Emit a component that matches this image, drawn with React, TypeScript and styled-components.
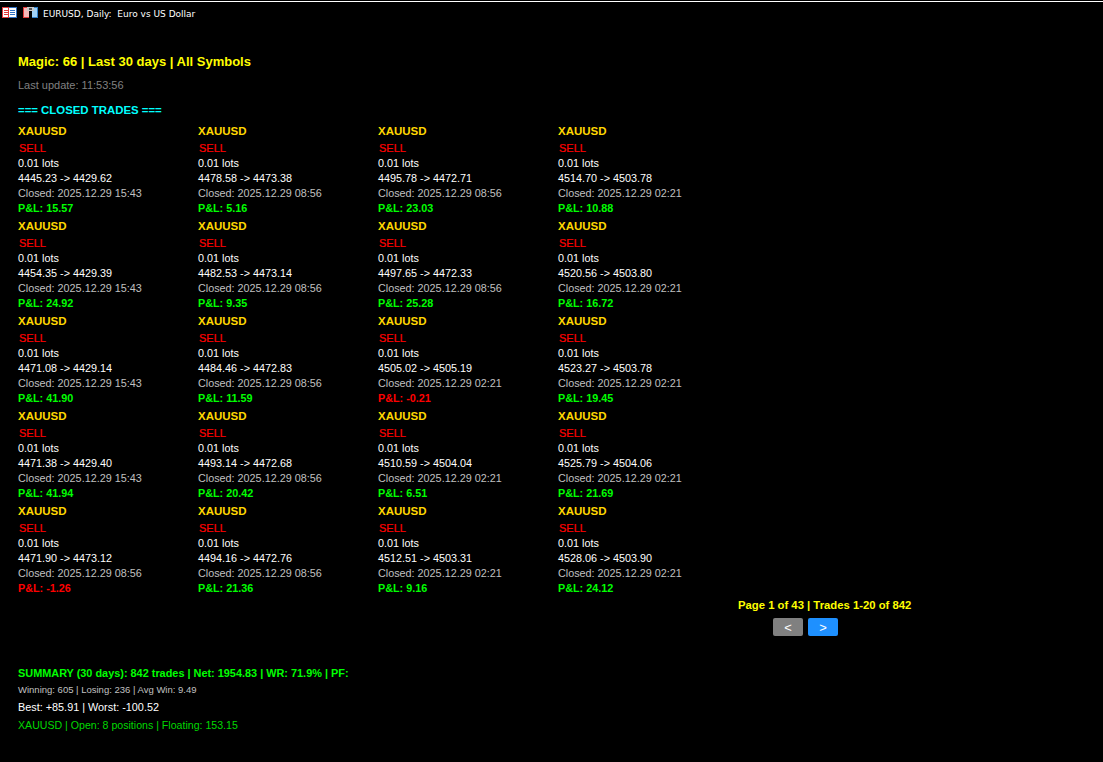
import React from "react";
import styled, { createGlobalStyle } from "styled-components";

type Trade = { open: string; close: string; closed: string; pnl: string };

const trades: Trade[] = [
  { open: "4445.23", close: "4429.62", closed: "2025.12.29 15:43", pnl: "15.57" },
  { open: "4478.58", close: "4473.38", closed: "2025.12.29 08:56", pnl: "5.16" },
  { open: "4495.78", close: "4472.71", closed: "2025.12.29 08:56", pnl: "23.03" },
  { open: "4514.70", close: "4503.78", closed: "2025.12.29 02:21", pnl: "10.88" },
  { open: "4454.35", close: "4429.39", closed: "2025.12.29 15:43", pnl: "24.92" },
  { open: "4482.53", close: "4473.14", closed: "2025.12.29 08:56", pnl: "9.35" },
  { open: "4497.65", close: "4472.33", closed: "2025.12.29 08:56", pnl: "25.28" },
  { open: "4520.56", close: "4503.80", closed: "2025.12.29 02:21", pnl: "16.72" },
  { open: "4471.08", close: "4429.14", closed: "2025.12.29 15:43", pnl: "41.90" },
  { open: "4484.46", close: "4472.83", closed: "2025.12.29 08:56", pnl: "11.59" },
  { open: "4505.02", close: "4505.19", closed: "2025.12.29 02:21", pnl: "-0.21" },
  { open: "4523.27", close: "4503.78", closed: "2025.12.29 02:21", pnl: "19.45" },
  { open: "4471.38", close: "4429.40", closed: "2025.12.29 15:43", pnl: "41.94" },
  { open: "4493.14", close: "4472.68", closed: "2025.12.29 08:56", pnl: "20.42" },
  { open: "4510.59", close: "4504.04", closed: "2025.12.29 02:21", pnl: "6.51" },
  { open: "4525.79", close: "4504.06", closed: "2025.12.29 02:21", pnl: "21.69" },
  { open: "4471.90", close: "4473.12", closed: "2025.12.29 08:56", pnl: "-1.26" },
  { open: "4494.16", close: "4472.76", closed: "2025.12.29 08:56", pnl: "21.36" },
  { open: "4512.51", close: "4503.31", closed: "2025.12.29 02:21", pnl: "9.16" },
  { open: "4528.06", close: "4503.90", closed: "2025.12.29 02:21", pnl: "24.12" },
];

export default function App() {
  return (
    <>
      <Global />
      <Window>
        <TopLine />
        <TitleBar>
          <svg width="15" height="11" viewBox="0 0 15 11">
            <rect x="0.5" y="0.5" width="14" height="10" fill="#fff" stroke="#2f6fc0" />
            <rect x="0.5" y="0.5" width="6" height="10" fill="#fff" stroke="#e03a3a" />
            <path d="M2 3.5h4M2 5.5h4M2 7.5h4" stroke="#e03a3a" />
            <path d="M8 3.5h5M8 5.5h5M8 7.5h5" stroke="#2f6fc0" />
          </svg>
          <svg width="15" height="11" viewBox="0 0 15 11">
            <rect x="0.5" y="0.5" width="6" height="10" fill="#f6b8b8" stroke="#e03a3a" />
            <rect x="8.5" y="0.5" width="6" height="10" fill="#9fd0f5" stroke="#2f7fc8" />
            <rect x="4" y="0" width="7" height="4" fill="#c8c8c8" />
            <rect x="6" y="1" width="3" height="2" fill="#555" />
            <rect x="6" y="4" width="3" height="7" fill="#000" />
          </svg>
          <TitleText>EURUSD, Daily:&nbsp; Euro vs US Dollar</TitleText>
        </TitleBar>
        <Panel>
          <Heading>Magic: 66 | Last 30 days | All Symbols</Heading>
          <Updated>Last update: 11:53:56</Updated>
          <Section>=== CLOSED TRADES ===</Section>
          <TradeGrid>
            {trades.map((t) => (
              <TradeCard key={t.open}>
                <Symbol>XAUUSD</Symbol>
                <Side>SELL</Side>
                <Info>0.01 lots</Info>
                <Info>
                  {t.open} -&gt; {t.close}
                </Info>
                <ClosedAt>Closed: {t.closed}</ClosedAt>
                <Pnl $loss={t.pnl.startsWith("-")}>P&amp;L: {t.pnl}</Pnl>
              </TradeCard>
            ))}
          </TradeGrid>
          <Pager>
            <PageInfo>Page 1 of 43 | Trades 1-20 of 842</PageInfo>
            <PagerButtons>
              <PageButton $active={false}>&lt;</PageButton>
              <PageButton $active>&gt;</PageButton>
            </PagerButtons>
          </Pager>
          <Summary>
            <SummaryTitle>SUMMARY (30 days): 842 trades | Net: 1954.83 | WR: 71.9% | PF:</SummaryTitle>
            <SummarySmall>Winning: 605 | Losing: 236 | Avg Win: 9.49</SummarySmall>
            <SummaryBest>Best: +85.91 | Worst: -100.52</SummaryBest>
            <SummaryOpen>XAUUSD | Open: 8 positions | Floating: 153.15</SummaryOpen>
          </Summary>
        </Panel>
      </Window>
    </>
  );
}

const Global = createGlobalStyle`
  html, body {
    margin: 0;
    padding: 0;
    background: #000;
  }
  body {
    font-family: "Liberation Sans", Arial, sans-serif;
  }
`;

const Window = styled.div`
  width: 1103px;
  height: 762px;
  background: #000;
  overflow: hidden;
`;

const TopLine = styled.div`
  height: 1px;
  margin-top: 1px;
  background: #fff;
`;

const TitleBar = styled.div`
  display: flex;
  align-items: center;
  gap: 6px;
  height: 21px;
  padding-left: 2px;
`;

const TitleText = styled.span`
  margin-left: -1px;
  padding-top: 3px;
  font-family: "DejaVu Sans", sans-serif;
  font-size: 9px;
  color: #fff;
  white-space: nowrap;
`;

const Panel = styled.div`
  padding: 29px 0 0 18px;
`;

const Heading = styled.div`
  height: 20px;
  line-height: 20px;
  font-size: 13px;
  font-weight: 700;
  color: #ffff00;
`;

const Updated = styled.div`
  margin-top: 3px;
  height: 20px;
  line-height: 20px;
  font-size: 11px;
  color: #808080;
`;

const Section = styled.div`
  margin-top: 5px;
  height: 20px;
  line-height: 20px;
  font-size: 11.4px;
  font-weight: 700;
  color: #00ffff;
`;

const TradeGrid = styled.div`
  display: grid;
  grid-template-columns: repeat(4, 180px);
  grid-auto-rows: 95px;
  margin-top: 3px;
`;

const TradeCard = styled.div`
  display: flex;
  flex-direction: column;
`;

const Symbol = styled.div`
  height: 17px;
  line-height: 17px;
  font-size: 11.5px;
  font-weight: 700;
  color: #ffd700;
`;

const Side = styled.div`
  height: 16px;
  line-height: 17px;
  padding-left: 1px;
  font-size: 11px;
  color: #ff0000;
  -webkit-text-stroke: 0.2px #ff0000;
`;

const Info = styled.div`
  height: 15px;
  line-height: 15px;
  font-size: 10.8px;
  color: #fff;
`;

const ClosedAt = styled(Info)`
  color: #c0c0c0;
`;

const Pnl = styled.div<{ $loss: boolean }>`
  height: 17px;
  line-height: 15px;
  font-size: 10.8px;
  font-weight: 700;
  color: ${(p) => (p.$loss ? "#ff0000" : "#00ff00")};
`;

const Pager = styled.div`
  margin-left: 720px;
  display: flex;
  flex-direction: column;
  align-items: flex-start;
`;

const PageInfo = styled.div`
  height: 18px;
  line-height: 18px;
  margin-top: -2px;
  font-size: 11.3px;
  font-weight: 700;
  color: #ffff00;
  white-space: nowrap;
`;

const PagerButtons = styled.div`
  display: flex;
  gap: 5px;
  margin-top: 4px;
  margin-left: 35px;
`;

const PageButton = styled.div<{ $active: boolean }>`
  width: 30px;
  height: 18px;
  border-radius: 2px;
  display: flex;
  align-items: center;
  justify-content: center;
  font-size: 13px;
  color: #fff;
  background: ${(p) => (p.$active ? "#1e90ff" : "#808080")};
`;

const Summary = styled.div`
  margin-top: 29px;
`;

const SummaryTitle = styled.div`
  height: 17px;
  line-height: 17px;
  font-size: 10.9px;
  font-weight: 700;
  color: #00ff00;
`;

const SummarySmall = styled.div`
  height: 15px;
  line-height: 15px;
  font-size: 9.5px;
  color: #c0c0c0;
`;

const SummaryBest = styled.div`
  height: 20px;
  line-height: 20px;
  font-size: 10.85px;
  color: #fff;
`;

const SummaryOpen = styled.div`
  height: 17px;
  line-height: 17px;
  font-size: 10.6px;
  color: #00d800;
`;
